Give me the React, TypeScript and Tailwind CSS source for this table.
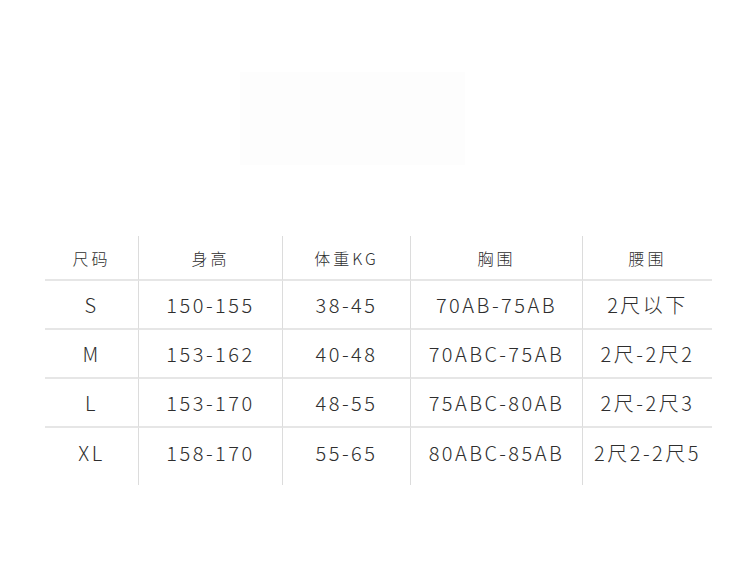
import React from 'react';

const header = ['尺码', '身高', '体重KG', '胸围', '腰围'];

const rows = [
  ['S', '150-155', '38-45', '70AB-75AB', '2尺以下'],
  ['M', '153-162', '40-48', '70ABC-75AB', '2尺-2尺2'],
  ['L', '153-170', '48-55', '75ABC-80AB', '2尺-2尺3'],
  ['XL', '158-170', '55-65', '80ABC-85AB', '2尺2-2尺5'],
];

const font = { fontFamily: '"Noto Sans CJK SC", "Noto Sans", sans-serif' };

export default function App() {
  return (
    <div className="w-[750px] h-[580px] bg-white flex flex-col overflow-hidden" style={font}>
      {/* faded banner at the top */}
      <div className="ml-[240px] mt-[72px] w-[225px] h-[93px] bg-[#fdfdfd]" />

      {/* size table */}
      <div className="ml-[45px] mt-[71px] w-[667px] grid grid-cols-[93px_144px_128px_172px_130px] text-[#2e2e2e]">
        {header.map((h, i) => (
          <div
            key={h}
            className={`h-[45px] flex items-center justify-center text-[16px] font-light tracking-[3px] border-b-2 border-[#e6e6e6] ${i > 0 ? 'border-l border-l-[#dcdcdc]' : ''}`}
          >
            {h}
          </div>
        ))}
        {rows.map((r, ri) =>
          r.map((c, ci) => (
            <div
              key={ri + '-' + ci}
              className={`flex items-center justify-center text-[20px] font-light tracking-[2.5px] ${ri < rows.length - 1 ? 'h-[49px] border-b-2 border-[#e6e6e6]' : 'h-[57px] pb-[8px]'} ${ci > 0 ? 'border-l border-l-[#dcdcdc]' : ''}`}
            >
              {c}
            </div>
          ))
        )}
      </div>
    </div>
  );
}
